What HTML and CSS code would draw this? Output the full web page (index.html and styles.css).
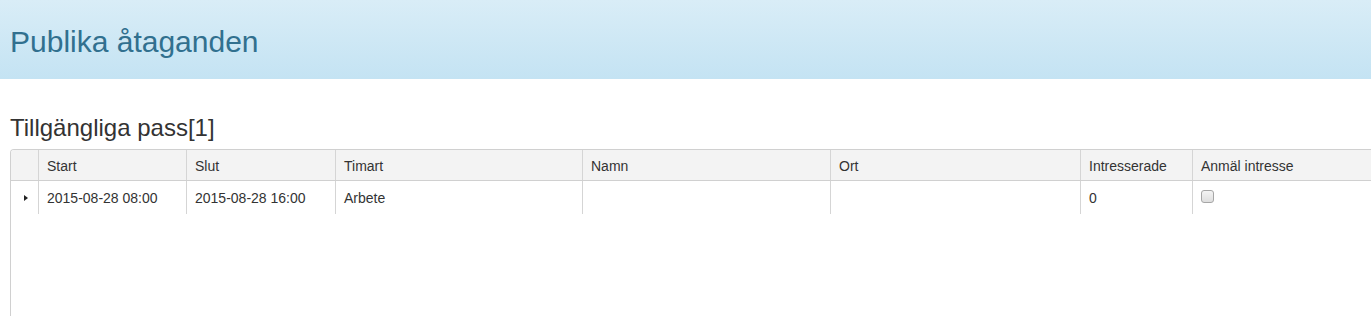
FILE: index.html
```html
<!DOCTYPE html>
<html>
<head>
	<title>Publika åtaganden</title>
	<meta charset="utf-8">
	<link rel="stylesheet" href="styles.css">
</head>
<body>
    <div class="page-header">
        <h2 class="page-title">Publika åtaganden</h2>
    </div>

    <div class="content">
        <h3 class="section-title">Tillgängliga pass[1]</h3>

        <div class="grid">
            <div class="grid-row grid-head">
                <div class="cell"></div>
                <div class="cell">Start</div>
                <div class="cell">Slut</div>
                <div class="cell">Timart</div>
                <div class="cell">Namn</div>
                <div class="cell">Ort</div>
                <div class="cell">Intresserade</div>
                <div class="cell">Anmäl intresse</div>
            </div>
            <div class="grid-row grid-item">
                <div class="cell hierarchy"><span class="expand-arrow"></span></div>
                <div class="cell">2015-08-28 08:00</div>
                <div class="cell">2015-08-28 16:00</div>
                <div class="cell">Arbete</div>
                <div class="cell"></div>
                <div class="cell"></div>
                <div class="cell">0</div>
                <div class="cell"><input type="checkbox" class="interest-box"></div>
            </div>
        </div>
    </div>
</body>
</html>
```

FILE: styles.css
```css
html, body {
    margin: 0;
    overflow: hidden;
}
body {
    font-family: "Liberation Sans", Arial, sans-serif;
    font-size: 14px;
    color: #333;
    background-color: #fff;
}
.page-header {
    background: linear-gradient(#d9edf7, #c4e3f3);
    padding: 25px 10px 21px 10px;
}
.page-title {
    margin: 0;
    font-size: 30px;
    font-weight: 500;
    line-height: 33px;
    color: #31708f;
}
.content {
    padding: 0 10px;
}
.section-title {
    margin: 35px 0 8px 0;
    font-size: 24px;
    font-weight: 500;
    line-height: 27px;
    color: #333;
}
.grid {
    width: 1420px;
    height: 166px;
    border: 1px solid #d0d0d0;
    border-bottom: none;
    border-radius: 4px 4px 0 0;
    overflow: hidden;
}
.grid-row {
    display: grid;
    grid-template-columns: 28px 148px 149px 247px 248px 250px 112px 1fr;
}
.grid-head {
    background-color: #f3f3f3;
    border-bottom: 1px solid #d0d0d0;
}
.cell {
    box-sizing: border-box;
    border-right: 1px solid #d5d5d5;
    padding: 0 8px;
    white-space: nowrap;
    display: flex;
    align-items: center;
}
.cell:last-child {
    border-right: none;
}
.grid-head .cell {
    height: 30px;
    padding-top: 1px;
}
.grid-item .cell {
    height: 33px;
}
.hierarchy {
    justify-content: center;
    padding: 0;
}
.expand-arrow {
    width: 0;
    height: 0;
    border-top: 3px solid transparent;
    border-bottom: 3px solid transparent;
    border-left: 4px solid #222;
    margin-left: 3px;
    margin-top: 1px;
}
.interest-box {
    appearance: none;
    -webkit-appearance: none;
    margin: 0 0 2px 0;
    width: 13px;
    height: 13px;
    border: 1px solid #a6a6a6;
    border-radius: 3px;
    background: linear-gradient(#f4f4f4, #dedede);
}
```
